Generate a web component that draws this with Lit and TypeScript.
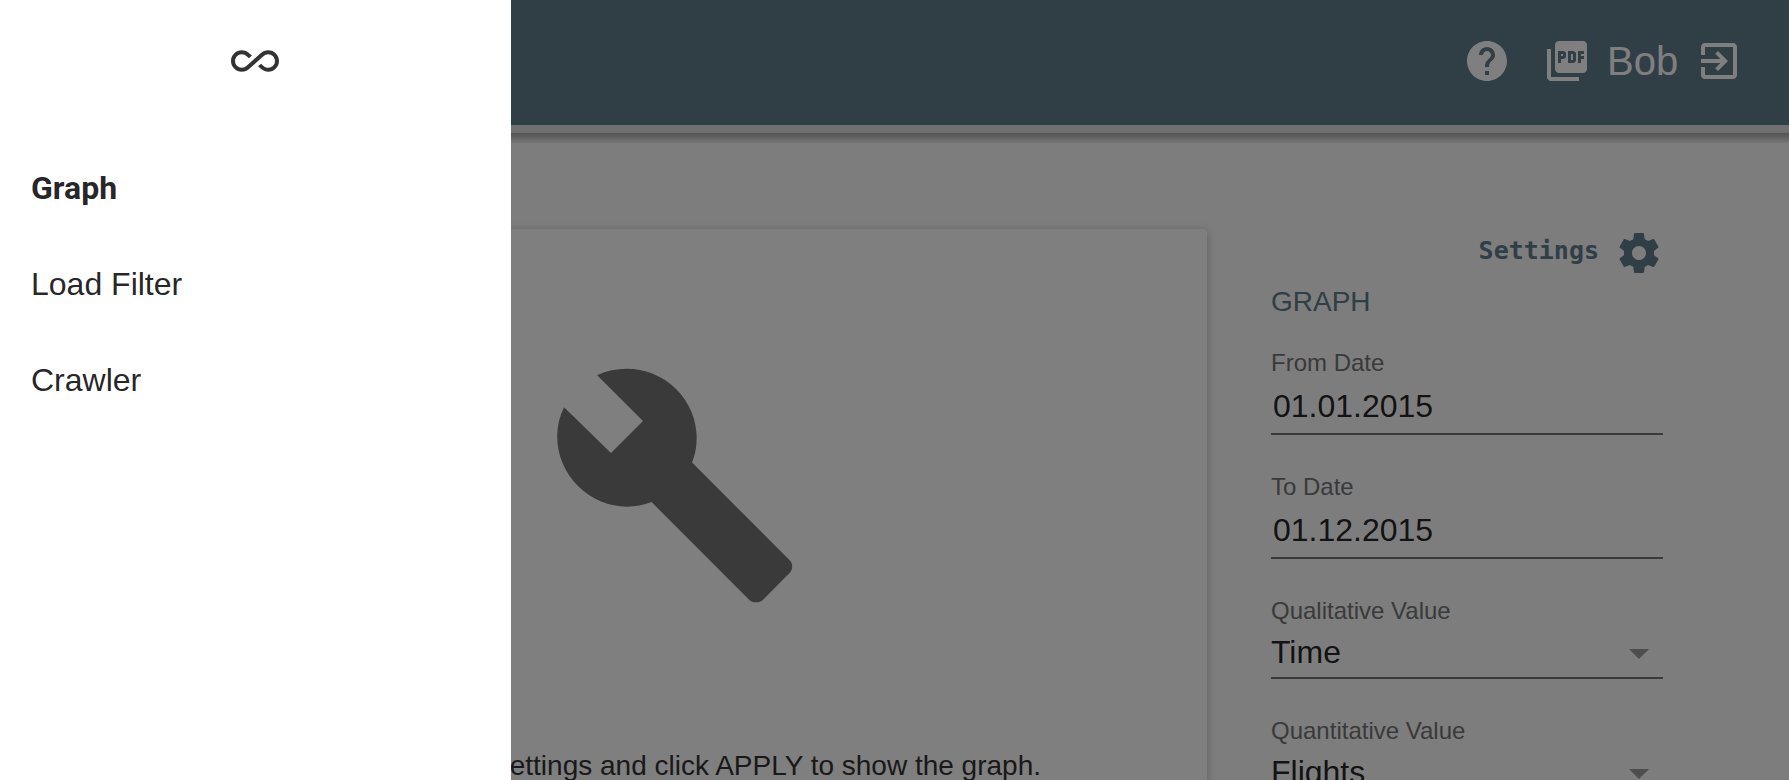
import { LitElement, html, css, svg } from "lit";
import { customElement, state } from "lit/decorators.js";

const icons = {
  infinite: svg`<path d="M18.6 6.62c-1.44 0-2.8.56-3.77 1.53L12 10.66 10.48 12h.01L7.8 14.39c-.64.64-1.49.99-2.4.99-1.87 0-3.39-1.51-3.39-3.38S3.53 8.62 5.4 8.62c.91 0 1.76.35 2.44 1.03l1.13 1 1.51-1.34L9.22 8.2C8.2 7.18 6.84 6.62 5.4 6.62 2.42 6.62 0 9.04 0 12s2.42 5.38 5.4 5.38c1.44 0 2.8-.56 3.77-1.53l2.83-2.5.01.01L13.52 12h-.01l2.69-2.39c.64-.64 1.49-.99 2.4-.99 1.87 0 3.39 1.51 3.39 3.38s-1.52 3.38-3.39 3.38c-.9 0-1.76-.35-2.44-1.03l-1.14-1.01-1.51 1.34 1.27 1.12c1.02 1.01 2.37 1.57 3.82 1.57 2.98 0 5.4-2.41 5.4-5.38s-2.42-5.38-5.4-5.38z"/>`,
  help: svg`<path d="M12 2C6.48 2 2 6.48 2 12s4.48 10 10 10 10-4.48 10-10S17.52 2 12 2zm1 17h-2v-2h2v2zm2.07-7.75l-.9.92C13.45 12.9 13 13.5 13 15h-2v-.5c0-1.1.45-2.1 1.17-2.83l1.24-1.26c.37-.36.59-.86.59-1.41 0-1.1-.9-2-2-2s-2 .9-2 2H8c0-2.21 1.79-4 4-4s4 1.79 4 4c0 .88-.36 1.68-.93 2.25z"/>`,
  pdf: svg`<path d="M20 2H8c-1.1 0-2 .9-2 2v12c0 1.1.9 2 2 2h12c1.1 0 2-.9 2-2V4c0-1.1-.9-2-2-2zm-8.5 7.5c0 .83-.67 1.5-1.5 1.5H9v2H7.5V7H10c.83 0 1.5.67 1.5 1.5v1zm5 2c0 .83-.67 1.5-1.5 1.5h-2.5V7H15c.83 0 1.5.67 1.5 1.5v3zm4-3H19v1h1.5V11H19v2h-1.5V7h3v1.5zM9 9.5h1v-1H9v1zM4 6H2v14c0 1.1.9 2 2 2h14v-2H4V6zm10 5.5h1v-3h-1v3z"/>`,
  exit: svg`<path d="M10.09 15.59L11.5 17l5-5-5-5-1.41 1.41L12.67 11H3v2h9.67l-2.58 2.59zM19 3H5c-1.11 0-2 .9-2 2v4h2V5h14v14H5v-4H3v4c0 1.1.89 2 2 2h14c1.1 0 2-.9 2-2V5c0-1.1-.9-2-2-2z"/>`,
  gear: svg`<path d="M19.43 12.98c.04-.32.07-.64.07-.98s-.03-.66-.07-.98l2.11-1.65c.19-.15.24-.42.12-.64l-2-3.46c-.12-.22-.39-.3-.61-.22l-2.49 1c-.52-.4-1.08-.73-1.69-.98l-.38-2.65C14.46 2.18 14.25 2 14 2h-4c-.25 0-.46.18-.49.42l-.38 2.65c-.61.25-1.17.59-1.69.98l-2.49-1c-.23-.09-.49 0-.61.22l-2 3.46c-.13.22-.07.49.12.64l2.11 1.65c-.04.32-.07.65-.07.98s.03.66.07.98l-2.11 1.65c-.19.15-.24.42-.12.64l2 3.46c.12.22.39.3.61.22l2.49-1c.52.4 1.08.73 1.69.98l.38 2.65c.03.24.24.42.49.42h4c.25 0 .46-.18.49-.42l.38-2.65c.61-.25 1.17-.59 1.69-.98l2.49 1c.23.09.49 0 .61-.22l2-3.46c.12-.22.07-.49-.12-.64l-2.11-1.65zM12 15.5c-1.93 0-3.5-1.57-3.5-3.5s1.57-3.5 3.5-3.5 3.5 1.57 3.5 3.5-1.57 3.5-3.5 3.5z"/>`,
  wrench: svg`<path d="M22.7 19l-9.1-9.1c.9-2.3.4-5-1.5-6.9-2-2-5-2.4-7.4-1.3L9 6 6 9 1.6 4.7C.4 7.1.9 10.1 2.9 12.1c1.9 1.9 4.6 2.4 6.9 1.5l9.1 9.1c.4.4 1 .4 1.4 0l2.3-2.3c.5-.4.5-1.1.1-1.4z"/>`,
};

const icon = (name: keyof typeof icons) =>
  html`<svg class="icon ${name}" viewBox="0 0 24 24" aria-hidden="true">${icons[name]}</svg>`;

@customElement("app-root")
export class AppRoot extends LitElement {
  @state() private page = "Graph";

  static styles = css`
    :host {
      display: block;
      position: relative;
      height: 100vh;
      overflow: hidden;
      background: #fafafa;
      color: rgba(0, 0, 0, 0.87);
      font-family: "Liberation Sans", Arial, sans-serif;
      font-size: 32px;
    }
    * { box-sizing: border-box; }
    button {
      padding: 0;
      border: 0;
      background: none;
      color: inherit;
      font: inherit;
      cursor: pointer;
    }
    .icon {
      display: block;
      width: 48px;
      height: 48px;
      fill: currentColor;
    }
    .toolbar {
      display: flex;
      align-items: center;
      justify-content: flex-end;
      height: 125px;
      padding: 0 30px 3px;
      background: #607d8b;
      color: #fff;
      font-size: 40px;
    }
    .tool {
      display: grid;
      place-items: center;
      width: 80px;
      height: 80px;
    }
    .user {
      min-width: 72px;
    }
    .strip {
      height: 8px;
      background: #e0e0e0;
    }
    .shade {
      height: 10px;
      background: linear-gradient(#a4a4a4, #eee);
    }
    .content {
      display: grid;
      grid-template-columns: 19fr 7fr;
      gap: 64px;
      padding: 86px 126px 64px 143px;
    }
    .card {
      display: flex;
      flex-direction: column;
      align-items: center;
      gap: 137px;
      padding: 128px 32px;
      border-radius: 4px;
      background: #fff;
      box-shadow: 0 2px 8px rgba(0, 0, 0, 0.26);
    }
    .wrench {
      width: 256px;
      height: 256px;
      color: #757575;
    }
    .hint {
      margin: 0;
      color: #333;
      font-size: 28px;
      line-height: 32px;
    }
    .settings-head {
      display: flex;
      align-items: center;
      justify-content: flex-end;
      gap: 16px;
      height: 48px;
      color: #607d8b;
    }
    .settings-title {
      margin: 0;
      font: bold 25px/44px "DejaVu Sans Mono", monospace;
      height: 48px;
    }
    .section {
      margin: 0 0 22px;
      color: #607d8b;
      font-size: 28px;
      font-weight: normal;
      line-height: 50px;
    }
    .field {
      display: flex;
      flex-direction: column;
      margin-bottom: 38px;
      border-bottom: 2px solid #757575;
    }
    .field label {
      color: #757575;
      font-size: 24px;
      line-height: 28px;
    }
    .field input,
    .field select {
      width: 100%;
      margin: 0;
      border: 0;
      border-radius: 0;
      outline: 0;
      background: none;
      color: inherit;
      font: inherit;
      appearance: none;
    }
    .field input {
      height: 56px;
      padding: 2px 2px 0;
    }
    .picker {
      display: grid;
      grid-template-columns: 1fr 48px;
      align-items: center;
    }
    .picker select {
      grid-area: 1 / 1 / 2 / 3;
      height: 52px;
      padding: 2px 48px 0 0;
    }
    .arrow {
      grid-area: 1 / 2;
      justify-self: center;
      border: 10px solid transparent;
      border-top-color: #9a9a9a;
      border-bottom: 0;
      margin-top: 6px;
      pointer-events: none;
    }
    .backdrop {
      position: absolute;
      inset: 0;
      background: rgba(0, 0, 0, 0.5);
    }
    .drawer {
      position: absolute;
      inset: 0 auto 0 0;
      width: calc(100% * 2 / 7);
      background: #fff;
    }
    .brand {
      display: grid;
      place-items: center;
      height: 124px;
      padding: 0 1px 2px 0;
      color: #333;
    }
    .nav {
      display: flex;
      flex-direction: column;
      padding-top: 16px;
    }
    .nav a {
      padding: 0 31px;
      color: inherit;
      line-height: 96px;
      text-decoration: none;
    }
    .nav a.active {
      font-family: Roboto, sans-serif;
      font-weight: bold;
    }
  `;

  private dateField(id: string, label: string, value: string) {
    return html`<div class="field">
      <label for=${id}>${label}</label>
      <input id=${id} type="text" inputmode="numeric" .value=${value} />
    </div>`;
  }

  private selectField(id: string, label: string, value: string) {
    return html`<div class="field">
      <label for=${id}>${label}</label>
      <div class="picker">
        <select id=${id}><option>${value}</option></select>
        <span class="arrow"></span>
      </div>
    </div>`;
  }

  private open(event: Event, page: string) {
    event.preventDefault();
    this.page = page;
  }

  render() {
    return html`
      <header class="toolbar">
        <button class="tool" aria-label="Help">${icon("help")}</button>
        <button class="tool" aria-label="Export PDF">${icon("pdf")}</button>
        <span class="user">Bob</span>
        <button class="tool" aria-label="Log out">${icon("exit")}</button>
      </header>
      <div class="strip"></div>
      <div class="shade"></div>
      <main class="content">
        <section class="card">
          ${icon("wrench")}
          <p class="hint">Customize the settings and click APPLY to show the graph.</p>
        </section>
        <aside>
          <div class="settings-head">
            <h2 class="settings-title">Settings</h2>
            <button aria-label="Settings">${icon("gear")}</button>
          </div>
          <h3 class="section">GRAPH</h3>
          ${this.dateField("from", "From Date", "01.01.2015")}
          ${this.dateField("to", "To Date", "01.12.2015")}
          ${this.selectField("qualitative", "Qualitative Value", "Time")}
          ${this.selectField("quantitative", "Quantitative Value", "Flights")}
        </aside>
      </main>
      <div class="backdrop"></div>
      <div class="drawer">
        <div class="brand">${icon("infinite")}</div>
        <nav class="nav">
          ${["Graph", "Load Filter", "Crawler"].map(
            (name) => html`<a
              href="#"
              class=${name === this.page ? "active" : ""}
              @click=${(e: Event) => this.open(e, name)}
              >${name}</a
            >`
          )}
        </nav>
      </div>
    `;
  }
}
